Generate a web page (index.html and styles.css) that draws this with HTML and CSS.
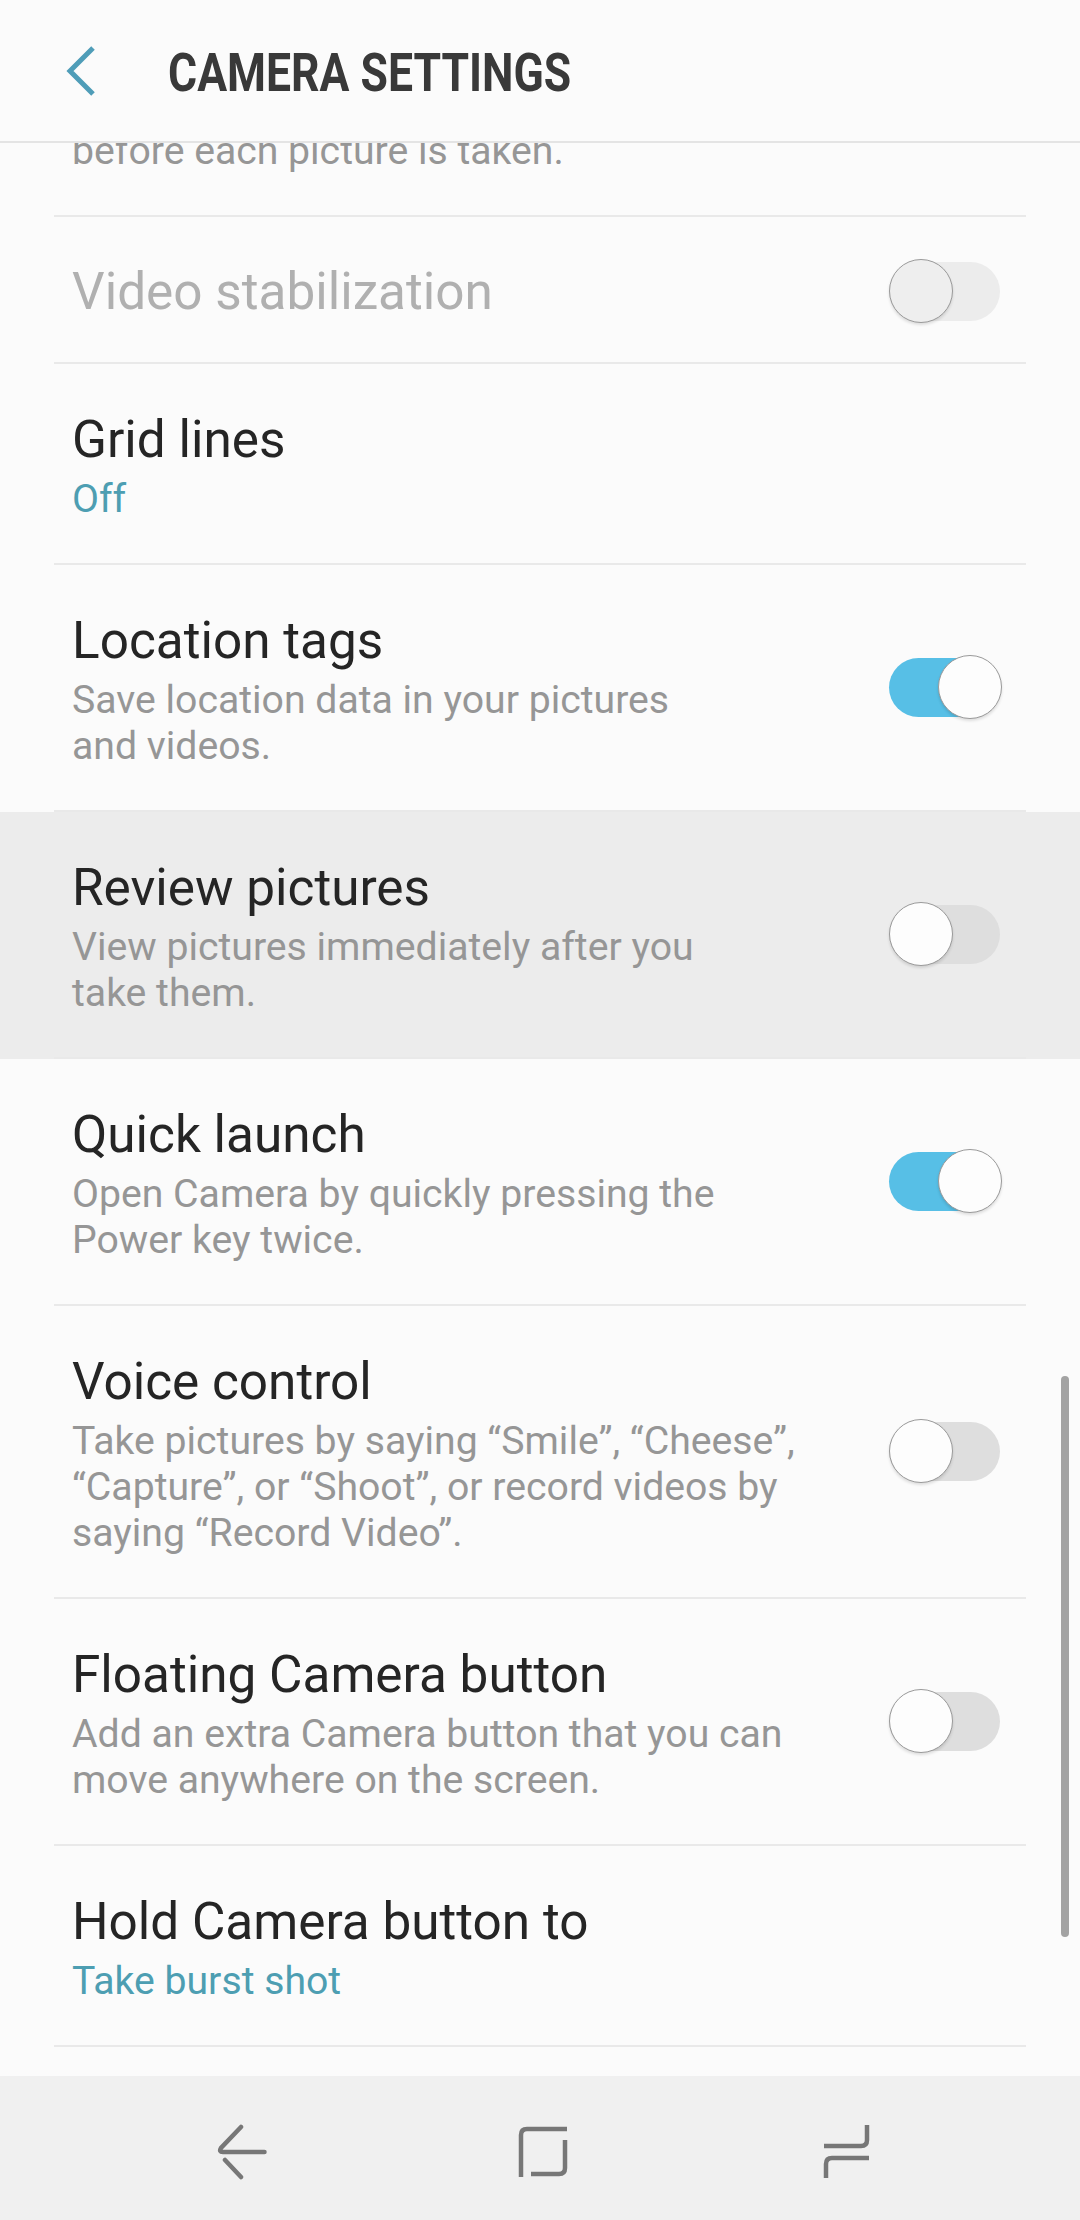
FILE: index.html
```html
<!DOCTYPE html>
<html lang="en">
<head>
<meta charset="UTF-8">
<meta name="viewport" content="width=device-width, initial-scale=1.0">
<title>Camera settings</title>
<link rel="stylesheet" href="styles.css">
</head>
<body>
<div class="screen">
    <header class="app-bar">
        <svg class="back-icon" width="36" height="54" viewBox="0 0 36 54">
            <path d="M29 4 L6 27 L29 50" fill="none" stroke="#4f9db8" stroke-width="5"/>
        </svg>
        <h1 class="app-title">CAMERA SETTINGS</h1>
    </header>

    <main class="list">
        <div class="row row-cut">
            <div class="row-inner">
                <div class="row-text">
                    <div class="row-sub">before each picture is taken.</div>
                </div>
            </div>
        </div>

        <div class="row">
            <div class="row-inner row-single">
                <div class="row-text">
                    <div class="row-title row-title-off">Video stabilization</div>
                </div>
                <div class="toggle toggle-disabled"><span class="thumb"></span></div>
            </div>
        </div>

        <div class="row">
            <div class="row-inner">
                <div class="row-text">
                    <div class="row-title">Grid lines</div>
                    <div class="row-value">Off</div>
                </div>
            </div>
        </div>

        <div class="row">
            <div class="row-inner">
                <div class="row-text">
                    <div class="row-title">Location tags</div>
                    <div class="row-sub">Save location data in your pictures<br>and videos.</div>
                </div>
                <div class="toggle toggle-on"><span class="thumb"></span></div>
            </div>
        </div>

        <div class="row row-pressed">
            <div class="row-inner">
                <div class="row-text">
                    <div class="row-title">Review pictures</div>
                    <div class="row-sub">View pictures immediately after you<br>take them.</div>
                </div>
                <div class="toggle"><span class="thumb"></span></div>
            </div>
        </div>

        <div class="row">
            <div class="row-inner">
                <div class="row-text">
                    <div class="row-title">Quick launch</div>
                    <div class="row-sub">Open Camera by quickly pressing the<br>Power key twice.</div>
                </div>
                <div class="toggle toggle-on"><span class="thumb"></span></div>
            </div>
        </div>

        <div class="row">
            <div class="row-inner">
                <div class="row-text">
                    <div class="row-title">Voice control</div>
                    <div class="row-sub">Take pictures by saying “Smile”, “Cheese”,<br>“Capture”, or “Shoot”, or record videos by<br>saying “Record Video”.</div>
                </div>
                <div class="toggle"><span class="thumb"></span></div>
            </div>
        </div>

        <div class="row">
            <div class="row-inner">
                <div class="row-text">
                    <div class="row-title">Floating Camera button</div>
                    <div class="row-sub">Add an extra Camera button that you can<br>move anywhere on the screen.</div>
                </div>
                <div class="toggle"><span class="thumb"></span></div>
            </div>
        </div>

        <div class="row">
            <div class="row-inner">
                <div class="row-text">
                    <div class="row-title">Hold Camera button to</div>
                    <div class="row-value">Take burst shot</div>
                </div>
            </div>
        </div>

        <div class="scrollbar"></div>
    </main>

    <nav class="nav-bar">
        <svg class="nav-icon" width="60" height="64" viewBox="0 0 60 64">
            <path d="M29 11 L9 32 Q6.500 36 11 36 L52.500 36 M13 44 L29 61" fill="none" stroke="#777" stroke-width="4.500" stroke-linecap="round"/>
        </svg>
        <svg class="nav-icon" width="60" height="64" viewBox="0 0 60 64">
            <path d="M53 13 L13 13 Q7 13 7 19 L7 61 M51 24 L51 52 Q51 58 45 58 L17 58" fill="none" stroke="#777" stroke-width="4.500"/>
        </svg>
        <svg class="nav-icon" width="60" height="64" viewBox="0 0 60 64">
            <path d="M51 9 L51 24 Q51 30 45 30 L8 30 M53 42 L16 42 Q10 42 10 48 L10 62" fill="none" stroke="#777" stroke-width="4.500"/>
        </svg>
    </nav>
</div>
</body>
</html>
```

FILE: styles.css
```css
html, body {
    margin: 0;
    padding: 0;
    height: 100%;
    overflow: hidden;
}

body {
    font-family: Roboto, sans-serif;
    background: #fbfbfb;
}

.screen {
    display: flex;
    flex-direction: column;
    height: 2220px;
}

.app-bar {
    display: flex;
    align-items: center;
    flex: none;
    height: 143px;
    padding-left: 64px;
    box-sizing: border-box;
    border-bottom: 2px solid #e4e4e4;
    background: #fbfbfb;
    position: relative;
    z-index: 1;
}

.back-icon {
    margin-right: 68px;
}

.app-title {
    margin: 5px 0 0;
    font-size: 53px;
    font-weight: 700;
    color: #393939;
    white-space: nowrap;
    transform: scaleX(0.84);
    transform-origin: left center;
}

.list {
    position: relative;
    flex: 1;
    overflow: hidden;
}

.row-cut {
    margin-top: -21px;
}

.row-pressed {
    background: #ececec;
}

.row-inner {
    display: flex;
    align-items: center;
    justify-content: space-between;
    margin: 0 54px;
    padding: 46px 26px 41px 18px;
    border-bottom: 2px solid #e9e9e9;
}

.row-cut .row-inner {
    padding-top: 0;
}

.row-single {
    padding-top: 45px;
    padding-bottom: 40px;
}

.row-title {
    font-size: 51.300px;
    line-height: 60px;
    color: #252525;
}

.row-title-off {
    color: #b0b0b0;
}

.row-sub {
    margin-top: 6px;
    font-size: 39.200px;
    line-height: 46px;
    color: #969696;
}

.row-value {
    margin-top: 6px;
    font-size: 39.200px;
    line-height: 46px;
    color: #4d9eb2;
}

.toggle {
    position: relative;
    flex: none;
    width: 111px;
    height: 59px;
    margin-bottom: 5px;
    border-radius: 30px;
    background: #dedede;
}

.row-single .toggle {
    margin-bottom: 1px;
}

.toggle-on {
    background: #57bfe6;
}

.toggle-disabled {
    background: #ececec;
}

.thumb {
    position: absolute;
    left: 0;
    top: -3px;
    width: 62px;
    height: 62px;
    border-radius: 50%;
    border: 1px solid #9a9a9a;
    background: #fdfdfd;
    box-shadow: 0 2px 3px rgba(0, 0, 0, 0.12);
}

.toggle-on .thumb {
    left: 49px;
}

.toggle-disabled .thumb {
    background: #eeeeee;
}

.scrollbar {
    position: absolute;
    left: 1061px;
    top: 1233px;
    width: 8px;
    height: 561px;
    border-radius: 4px;
    background: #a3a3a3;
}

.nav-bar {
    display: flex;
    justify-content: center;
    gap: 242px;
    align-items: center;
    flex: none;
    height: 144px;
    padding-left: 8px;
    background: #f0f0f0;
}

.nav-icon {
    display: block;
}
```
